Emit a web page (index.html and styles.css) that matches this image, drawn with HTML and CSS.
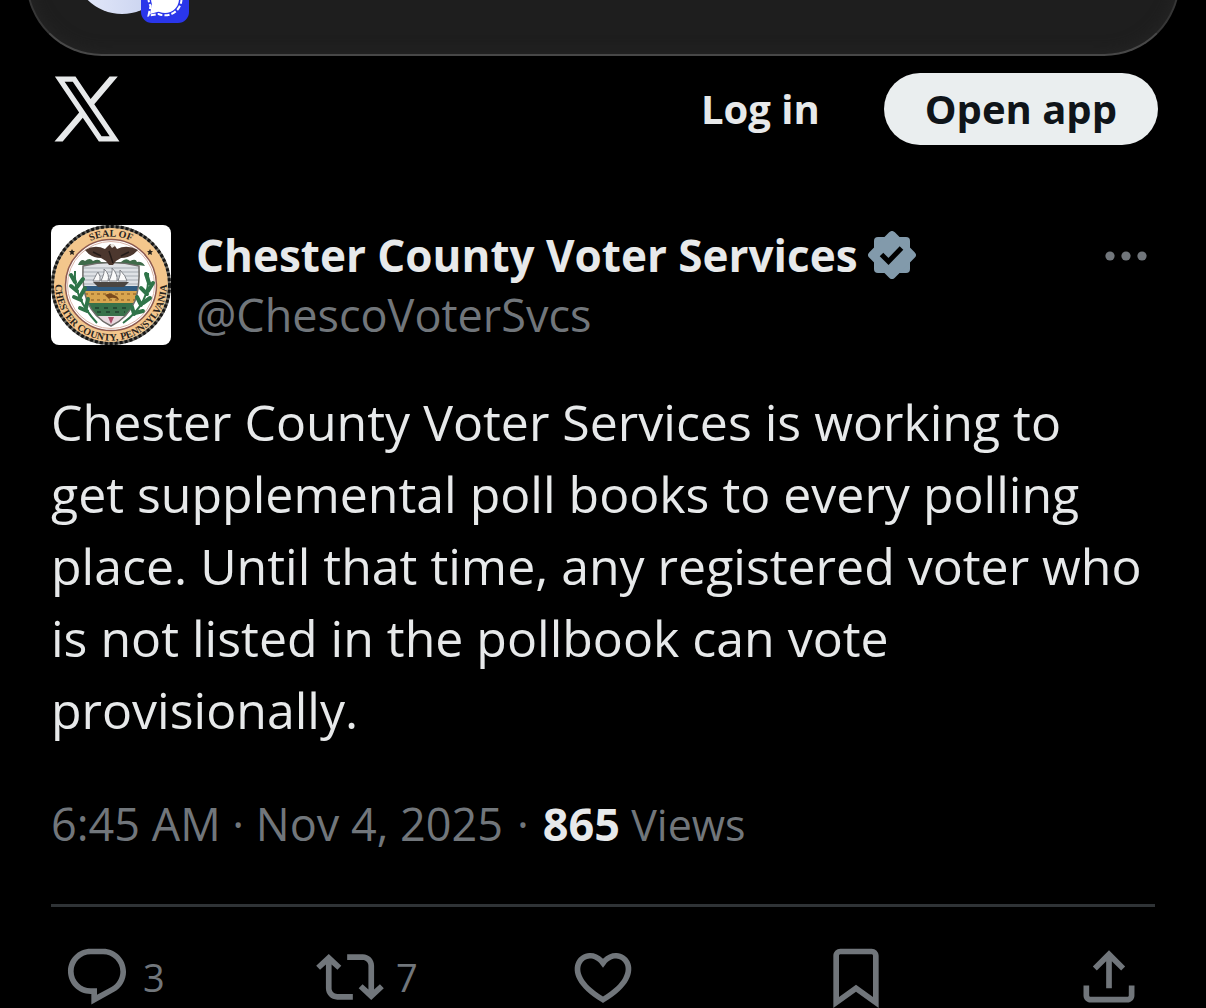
FILE: index.html
```html
<!DOCTYPE html>
<html lang="en">
<head>
<meta charset="utf-8">
<meta name="viewport" content="width=device-width, initial-scale=1">
<title>Chester County Voter Services on X</title>
<link rel="stylesheet" href="styles.css">
</head>
<body>
<div class="banner">
  <div class="banner-avatar">
    <svg class="banner-badge" viewBox="0 0 48 48" aria-hidden="true">
      <rect width="48" height="48" rx="11" fill="#2a36ea"/>
      <circle cx="24" cy="24" r="14" fill="#fff"/>
      <path d="M11 28L9 39L20 36Z" fill="#fff"/>
      <path d="M40.500 24A16.500 16.500 0 0 1 17.500 39L7.500 40.500L9.500 31A16.500 16.500 0 0 1 7.500 24" fill="none" stroke="#fff" stroke-width="2" stroke-dasharray="5 2"/>
    </svg>
  </div>
</div>

<header class="topbar">
  <a class="logo" href="#" aria-label="X">
    <svg viewBox="0 0 24 24" aria-hidden="true"><path d="M21.742 21.75l-7.563-11.179 7.056-8.321h-2.456l-5.691 6.714-4.54-6.714H2.359l7.290 10.776L2.250 21.750h2.456l6.035-7.118 4.818 7.118h6.191-.008zM7.739 3.818L18.810 20.182h-2.447L5.290 3.818h2.447z"/></svg>
  </a>
  <a class="login" href="#">Log in</a>
  <button class="open-app" type="button">Open app</button>
</header>

<main class="post">
  <div class="author">
    <svg class="avatar" viewBox="0 0 120 120" role="img" aria-label="Seal of Chester County, Pennsylvania">
      <defs>
        <path id="arc-top" d="M11.500 60A48.500 48.500 0 0 1 108.500 60"/>
        <path id="arc-bottom" d="M8 40A55.700 55.700 0 1 0 112 40"/>
        <clipPath id="shield"><path d="M32 41Q60 34 88 41Q89 62 84 76Q77 93 60 101Q43 93 36 76Q31 62 32 41Z"/></clipPath>
      </defs>
      <rect width="120" height="120" fill="#fff"/>
      <circle cx="60" cy="60" r="58.500" fill="#f3c68c" stroke="#6a6963" stroke-width="3"/>
      <circle cx="60" cy="60" r="58.500" fill="none" stroke="#171717" stroke-width="3" stroke-dasharray="3 2"/>
      <circle cx="60" cy="60" r="45.500" fill="#fff" stroke="#8d5a50" stroke-width="1.500"/>
      <circle cx="60" cy="60" r="43.500" fill="none" stroke="#d9b3a6" stroke-width="1"/>
      <g class="seal-text">
        <text><textPath href="#arc-top" startOffset="50%" text-anchor="middle">SEAL OF</textPath></text>
        <text><textPath href="#arc-bottom" startOffset="50%" text-anchor="middle">CHESTER COUNTY, PENNSYLVANIA</textPath></text>
      </g>
      <path d="M21 24l1 2h2l-1.500 1.500.5 2.500-2-1-2 1 .5-2.500L18 26h2zM99 24l1 2h2l-1.500 1.500.5 2.500-2-1-2 1 .5-2.500L96 26h2z" fill="#29241d"/>
      <path d="M27 40q3-7 7-4 5-4 8 0 6-3 8 1h20q5-5 9-1 6-3 7 1 5-1 8 4l-7-1-5 2H40l-5-2z" fill="#3f6b4a"/>
      <g clip-path="url(#shield)">
        <rect x="30" y="34" width="60" height="28" fill="#dfe2e6"/>
        <path d="M30 43h60M30 47h60M30 51h60M30 55h60M30 59h60" stroke="#a4abb2" stroke-width="1"/>
        <rect x="30" y="61" width="60" height="5" fill="#305b80"/>
        <rect x="30" y="66" width="60" height="12" fill="#d9a64f"/>
        <path d="M34 69h52M34 75h52" stroke="#9d6f2f" stroke-width="1.500" stroke-dasharray="3 3"/>
        <rect x="30" y="78" width="60" height="14" fill="#38714a"/>
        <path d="M44 83h32M46 87h28" stroke="#264b34" stroke-width="2" stroke-dasharray="4 5"/>
        <rect x="30" y="91" width="60" height="12" fill="#e8d8df"/>
        <path d="M57 92l3 7 3-7" fill="#a9516a"/>
      </g>
      <path d="M32 41Q60 34 88 41Q89 62 84 76Q77 93 60 101Q43 93 36 76Q31 62 32 41Z" fill="none" stroke="#6e6c69" stroke-width="1.500"/>
      <path d="M42 57h36l-5 5H47z" fill="#4b4642"/>
      <path d="M42 56q4-8 5-9 3 4 2 9zM50 56q4-9 3-12 6 5 4 12zM58 56q4-9 3-13 6 6 5 13zM67 56q3-7 2-11 6 6 7 11z" fill="#fafafa" stroke="#7e8187" stroke-width="1"/>
      <path d="M54 70q5-3 9 0 4 1 5 5-6-4-10-1z" fill="#7a4a1c"/>
      <path d="M34 25Q44 19 54 24L57 21Q60 17 64 21L66 24Q76 19 87 25Q80 33 70 33L65 36L62 40H58L55 36L50 33Q40 33 34 25Z" fill="#4c372e"/>
      <path d="M42 27l8 4M78 27l-8 4M58 26l4 12" stroke="#241b18" stroke-width="1.500"/>
      <path d="M59 20q3-3 5 1l-3 2z" fill="#e9e5df"/>
      <g fill="none" stroke="#2f7449">
        <path d="M24 46Q22 72 46 98M97 48Q100 78 72 98" stroke-width="2"/>
        <path d="M24 57l-4-7M26 66l-6-5M26 62l6-8M30 75l-7-3M29 72l5-9M36 86l-7-3M35 83l2-9M98 58l-3-9M97 66l5-8M96 69l-6-6M92 78l7-5M90 80l-4-8M84 88l8-2M83 89l-2-7" stroke-width="4" stroke-linecap="round"/>
      </g>
    </svg>
    <div class="names">
      <div class="name-line">
        <a class="name" href="#">Chester County Voter Services</a>
        <svg class="verified" viewBox="0 0 48 48" role="img" aria-label="Verified account">
          <rect x="6" y="6" width="36" height="36" rx="4"/>
          <rect x="6" y="6" width="36" height="36" rx="4" transform="rotate(45 24 24)"/>
          <path class="tick" d="M13.500 23.500L20.500 30.500L33.500 17"/>
        </svg>
      </div>
      <a class="handle" href="#">@ChescoVoterSvcs</a>
    </div>
    <button class="more" type="button" aria-label="More">
      <svg viewBox="0 0 42 10" aria-hidden="true"><circle cx="5" cy="5" r="4.600"/><circle cx="21" cy="5" r="4.600"/><circle cx="37" cy="5" r="4.600"/></svg>
    </button>
  </div>

  <p class="body">Chester County Voter Services is working to<br>get supplemental poll books to every polling place. Until that time, any registered voter who is not listed in the pollbook can vote provisionally.</p>

  <div class="meta">
    <a class="date" href="#">6:45 AM · Nov 4, 2025</a>
    <span>·</span>
    <span class="views"><strong>865</strong> Views</span>
  </div>

  <div class="actions">
    <button type="button" aria-label="3 replies">
      <svg viewBox="0 0 24 24" aria-hidden="true"><path d="M1.751 10c0-4.420 3.584-8 8.005-8h4.366c4.490 0 8.129 3.640 8.129 8.130 0 2.960-1.607 5.680-4.196 7.110l-8.054 4.460v-3.690h-.067c-4.490.1-8.183-3.510-8.183-8.010zm8.005-6c-3.317 0-6.005 2.690-6.005 6 0 3.370 2.770 6.080 6.138 6.010l.351-.01h1.761v2.300l5.087-2.810c1.951-1.080 3.163-3.130 3.163-5.360 0-3.390-2.744-6.130-6.129-6.130H9.756z"/></svg>
      <span>3</span>
    </button>
    <button type="button" aria-label="7 reposts">
      <svg viewBox="0 0 24 24" aria-hidden="true"><path d="M4.500 3.880l4.432 4.140-1.364 1.460L5.500 7.550V16c0 1.100.896 2 2 2H13v2H7.500c-2.209 0-4-1.790-4-4V7.550L1.432 9.480.068 8.020 4.500 3.880zM16.500 6H11V4h5.500c2.209 0 4 1.790 4 4v8.450l2.068-1.930 1.364 1.460-4.432 4.140-4.432-4.140 1.364-1.460 2.068 1.930V8c0-1.100-.896-2-2-2z"/></svg>
      <span>7</span>
    </button>
    <button type="button" aria-label="Like">
      <svg viewBox="0 0 24 24" aria-hidden="true"><path d="M16.697 5.500c-1.222-.06-2.679.51-3.890 2.160l-.805 1.090-.806-1.090C9.984 6.010 8.526 5.440 7.304 5.500c-1.243.07-2.349.78-2.910 1.910-.552 1.120-.633 2.780.479 4.820 1.074 1.970 3.257 4.270 7.129 6.610 3.870-2.340 6.052-4.640 7.126-6.610 1.111-2.040 1.030-3.700.477-4.820-.561-1.130-1.666-1.840-2.908-1.910zm4.187 7.690c-1.351 2.480-4.001 5.120-8.379 7.670l-.503.3-.504-.3c-4.379-2.550-7.029-5.190-8.382-7.670-1.360-2.500-1.410-4.860-.514-6.670.887-1.790 2.647-2.910 4.601-3.010 1.651-.09 3.368.56 4.798 2.010 1.429-1.450 3.146-2.100 4.796-2.010 1.954.1 3.714 1.220 4.601 3.010.896 1.810.846 4.170-.514 6.670z"/></svg>
    </button>
    <button type="button" aria-label="Bookmark">
      <svg viewBox="0 0 24 24" aria-hidden="true"><path d="M4 4.500C4 3.120 5.119 2 6.500 2h11C18.881 2 20 3.120 20 4.500v18.440l-8-5.710-8 5.710V4.500zM6.500 4c-.276 0-.5.220-.5.5v14.560l6-4.290 6 4.290V4.500c0-.28-.224-.5-.5-.5h-11z"/></svg>
    </button>
    <button type="button" aria-label="Share">
      <svg viewBox="0 0 24 24" aria-hidden="true"><path d="M12 2.590l5.700 5.700-1.410 1.420L13 6.410V16h-2V6.410l-3.300 3.300-1.410-1.420L12 2.590zM21 15l-.02 3.510c0 1.380-1.120 2.490-2.500 2.490H5.500C4.110 21 3 19.880 3 18.500V15h2v3.500c0 .28.220.5.5.5h12.980c.28 0 .5-.22.5-.5L19 15h2z"/></svg>
    </button>
  </div>
</main>
</body>
</html>
```
FILE: styles.css
```css
* {
  box-sizing: border-box;
}

html {
  background: #000;
}

body {
  margin: 0;
  overflow-x: hidden;
  background: #000;
  color: #e7e9ea;
  font-family: "Open Sans", "Noto Sans", sans-serif;
  scrollbar-width: none;
}

a {
  color: inherit;
  text-decoration: none;
}

button {
  margin: 0;
  padding: 0;
  border: 0;
  background: none;
  color: inherit;
  font: inherit;
  cursor: pointer;
}

svg {
  display: block;
  flex: none;
}

.banner {
  height: 156px;
  margin: -100px 26px 0;
  padding: 14px 45px;
  border: 2px solid #363636;
  border-bottom-color: #484848;
  border-radius: 76px;
  background: #1e1e1e;
  box-shadow: inset 0 0 16px #262626;
}

.banner-avatar {
  position: relative;
  width: 98px;
  height: 98px;
  border-radius: 50%;
  background: linear-gradient(90deg, #e6ebfb, #c3cdec);
}

.banner-badge {
  position: absolute;
  right: -18px;
  bottom: -9px;
  width: 48px;
  height: 48px;
}

.topbar {
  display: flex;
  align-items: center;
  padding: 13px 48px 0 47px;
}

.logo {
  margin-right: auto;
}

.logo svg {
  width: 80px;
  height: 80px;
  fill: #e7e9ea;
}

.login,
.open-app {
  font-size: 40px;
  font-weight: 700;
  line-height: 72px;
}

.login {
  margin-right: 64px;
}

.open-app {
  padding: 0 41px;
  border-radius: 36px;
  background: #eaeeef;
  color: #0f1419;
}

.post {
  padding: 76px 51px 0;
}

.author {
  display: flex;
  align-items: flex-start;
}

.avatar {
  width: 120px;
  height: 120px;
  border-radius: 8px;
}

.seal-text {
  fill: #29241d;
  font: bold 10px "Liberation Serif", serif;
}

.names {
  flex: 1;
  padding-left: 25px;
  line-height: 60px;
}

.name-line {
  display: flex;
  align-items: center;
  gap: 10px;
}

.name {
  font-size: 44px;
  font-weight: 700;
}

.verified {
  width: 48px;
  height: 48px;
  fill: #829aab;
}

.tick {
  fill: none;
  stroke: #000;
  stroke-width: 5;
}

.handle {
  display: block;
  color: #71767b;
  font-size: 45px;
}

.more {
  padding: 26px 8px;
}

.more svg {
  width: 42px;
  height: 10px;
  fill: #71767b;
}

.body {
  margin: 41px 0 0;
  font-size: 50px;
  line-height: 72px;
}

.meta {
  display: flex;
  align-items: baseline;
  gap: 14px;
  margin-top: 48px;
  padding-bottom: 49px;
  border-bottom: 3px solid #2f3336;
  color: #71767b;
  font-size: 45px;
  line-height: 60px;
}

.views {
  font-size: 43px;
}

.views strong {
  color: #e7e9ea;
  font-size: 45px;
  font-weight: 700;
}

.actions {
  display: flex;
  justify-content: space-between;
  padding: 36px 12px 0;
  color: #71767b;
  font-size: 38px;
  line-height: 68px;
}

.actions button {
  display: flex;
  flex: 1;
  gap: 12px;
}

.actions button:last-child {
  flex: none;
}

.actions svg {
  width: 68px;
  height: 68px;
  fill: #71767b;
}
```
